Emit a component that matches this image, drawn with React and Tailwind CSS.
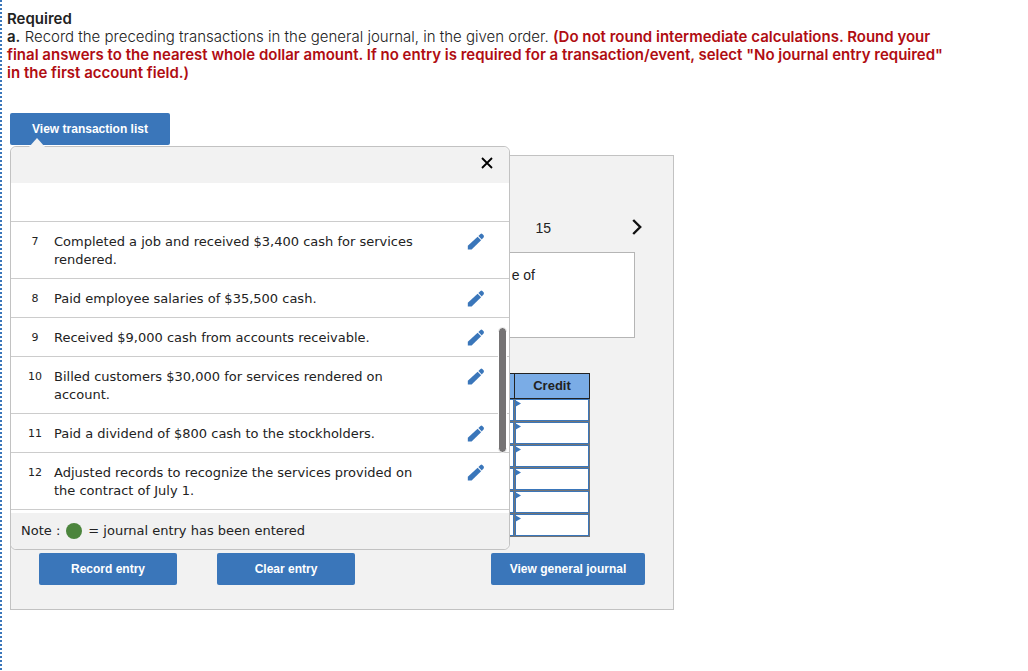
import React from "react";

const transactions = [
  { id: 7, text: "Completed a job and received $3,400 cash for services rendered." },
  { id: 8, text: "Paid employee salaries of $35,500 cash." },
  { id: 9, text: "Received $9,000 cash from accounts receivable." },
  { id: 10, text: "Billed customers $30,000 for services rendered on account." },
  { id: 11, text: "Paid a dividend of $800 cash to the stockholders." },
  { id: 12, text: "Adjusted records to recognize the services provided on the contract of July 1." },
];

const journalRows = [1, 2, 3, 4, 5, 6];

function PencilIcon() {
  return (
    <svg width="18" height="18" viewBox="0 0 18 18" fill="#3a76ba" aria-hidden="true">
      <path d="M.8 12.8 10.6 3.7 14.1 7.2 4.6 16.4H.8Z" />
      <path d="M11.4 3 13.5 1Q14.4.2 15.3 1L16.6 2.3Q17.4 3.2 16.6 4.2L14.8 6.4Z" />
    </svg>
  );
}

function ActionButton({ children, className }) {
  return (
    <button
      type="button"
      className={
        "h-8 rounded-xs bg-[#3a76ba] font-['Liberation_Sans',sans-serif] text-xs font-bold text-white " + className
      }
    >
      {children}
    </button>
  );
}

function AmountCell({ label }) {
  return (
    <td className="border border-[#757575] p-0">
      <div className="relative h-[22px]">
        <input aria-label={label} className="block size-full border border-[#3a76ba] bg-white px-1 text-xs" />
        <svg className="absolute top-px left-0" width="6" height="7" viewBox="0 0 6 7" fill="#3a76ba" aria-hidden="true">
          <path d="M0 0 6 3.5 0 7Z" />
        </svg>
      </div>
    </td>
  );
}

function TransactionPopover() {
  return (
    <section
      aria-label="Transactions"
      className="absolute -top-[10px] -left-px z-10 w-[500px] rounded-md border border-[#c2c2c2] bg-white font-['DejaVu_Sans',sans-serif] text-[13px] leading-[18px] text-[#222]"
    >
      <svg className="absolute -top-[9px] left-[18px]" width="16" height="10" viewBox="0 0 16 10" aria-hidden="true">
        <path d="M0 9 8 0 16 9V10H0Z" fill="#f2f2f2" />
      </svg>
      <header className="flex h-9 items-center justify-end rounded-t-md bg-[#f2f2f2] pr-[14px] pb-1">
        <button type="button" aria-label="Close" className="flex size-4 items-center justify-center">
          <svg width="12" height="12" viewBox="0 0 12 12" fill="none" stroke="#000" strokeWidth="1.8" aria-hidden="true">
            <path d="M1 1 11 11M11 1 1 11" />
          </svg>
        </button>
      </header>
      <div className="relative pb-[3px]">
        <div className="h-[39px] border-b border-[#ccc]" />
        <ul>
          {transactions.map((t) => (
            <li key={t.id} className="flex items-start border-b border-[#ccc] pt-[11px] pb-[9px]">
              <span className="w-12 text-center text-[11px]">{t.id}</span>
              <p className="-ml-[5px] w-[380px]">{t.text}</p>
              <button type="button" aria-label={"Edit transaction " + t.id} className="ml-[33px]">
                <PencilIcon />
              </button>
            </li>
          ))}
        </ul>
        <div className="absolute top-[144px] right-[2px] h-[126px] w-[9px] rounded-full border border-white bg-[#757374]" />
      </div>
      <footer className="flex h-9 items-center rounded-b-md bg-[#f1f1f1] pl-[10px]">
        Note :
        <span className="mx-[6px] size-4 rounded-full bg-[#4c853d]" />= journal entry has been entered
      </footer>
    </section>
  );
}

export default function App() {
  return (
    <main className="min-h-screen bg-white bg-[repeating-linear-gradient(to_bottom,#3a76ba_0px,#3a76ba_2px,white_2px,white_4px)] bg-[length:2px_100%] bg-no-repeat pt-[10px] pr-[72px] pl-[7px]">
      <div className="font-[Inter,sans-serif] text-[15px] leading-[18px] text-[#222]">
        <h1 className="font-semibold">Required</h1>
        <p className="font-light">
          <b className="font-semibold">a.</b> Record the preceding transactions in the general journal, in the given
          order.{" "}
          <b className="font-semibold text-[#b00d12]">
            (Do not round intermediate calculations. Round your final answers to the nearest whole dollar amount. If no
            entry is required for a transaction/event, select "No journal entry required" in the first account field.)
          </b>
        </p>
      </div>

      <div className="mt-[31px] ml-[3px] max-w-[664px]">
        <ActionButton className="block w-40">View transaction list</ActionButton>
        <div className="relative mt-[10px] border border-[#c2c2c2] bg-[#f2f2f2] px-7 pb-6 font-['Liberation_Sans',sans-serif] text-[#222]">
          <TransactionPopover />
          <nav className="flex items-center justify-end pt-[62px] pr-[3px] text-[14px] leading-5">
            <a href="#15">15</a>
            <button type="button" aria-label="Next" className="ml-[81px] flex pb-0.5">
              <svg width="10" height="16" viewBox="0 0 10 16" fill="none" stroke="#111" strokeWidth="2.4" aria-hidden="true">
                <path d="M1.2 1 8.2 8 1.2 15" />
              </svg>
            </button>
          </nav>
          <div className="mt-[14px] mr-[10px] h-[86px] border border-[#b5b5b5] bg-white pt-[13px] pr-[99px] text-right text-[14px] leading-[18px]">
            e of
          </div>
          <table className="mt-[35px] mr-[55px] ml-auto table-fixed border-collapse">
            <thead>
              <tr className="h-[25px] bg-[#7aace6] text-[13px] leading-[18px]">
                <td className="w-[75px] border border-[#222]" />
                <th className="w-[75px] border border-[#222] font-bold">Credit</th>
              </tr>
            </thead>
            <tbody>
              {journalRows.map((n) => (
                <tr key={n} className="h-[23px]">
                  <AmountCell label={"Debit, line " + n} />
                  <AmountCell label={"Credit, line " + n} />
                </tr>
              ))}
            </tbody>
          </table>
          <div className="mt-4 flex">
            <ActionButton className="w-[138px]">Record entry</ActionButton>
            <ActionButton className="ml-10 w-[138px]">Clear entry</ActionButton>
            <ActionButton className="ml-auto w-[154px]">View general journal</ActionButton>
          </div>
        </div>
      </div>
    </main>
  );
}
